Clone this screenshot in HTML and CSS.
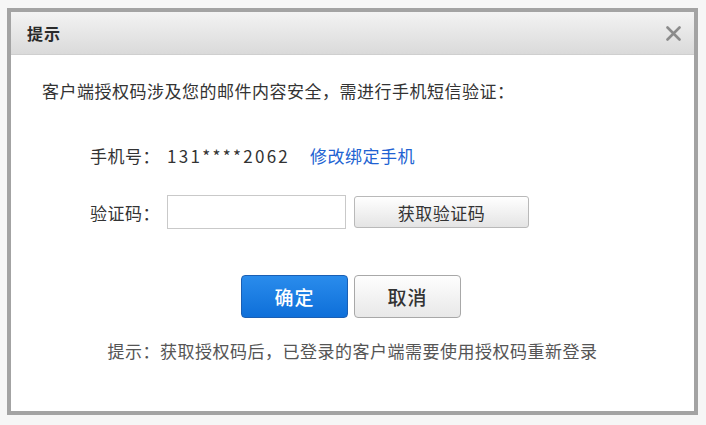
FILE: index.html
```html
<!DOCTYPE html>
<html lang="zh-CN">
<head>
<meta charset="utf-8">
<title>提示</title>
<link rel="stylesheet" href="styles.css">
</head>
<body>
<div class="dialog">
  <div class="dialog-header">
    <span class="dialog-title">提示</span>
    <svg class="close" width="15" height="15" viewBox="0 0 15 15"><path d="M1.5 1.5 L13.5 13.5 M13.5 1.5 L1.5 13.5" stroke="#8b8b8b" stroke-width="2.6" stroke-linecap="round"/></svg>
  </div>
  <div class="dialog-body">
    <p class="intro">客户端授权码涉及您的邮件内容安全，需进行手机短信验证：</p>
    <div class="row phone-row">
      <span class="label">手机号：</span>
      <span class="phone">131****2062</span>
      <a class="link" href="#">修改绑定手机</a>
    </div>
    <div class="row code-row">
      <span class="label">验证码：</span>
      <input class="code-input" type="text">
      <button class="get-code" type="button">获取验证码</button>
    </div>
    <div class="actions">
      <button class="btn btn-primary" type="button">确定</button>
      <button class="btn btn-default" type="button">取消</button>
    </div>
    <p class="hint">提示：获取授权码后，已登录的客户端需要使用授权码重新登录</p>
  </div>
</div>
</body>
</html>
```

FILE: styles.css
```css
* { box-sizing: border-box; }
html, body { margin: 0; padding: 0; }
body {
  background: #f6f6f6;
  font-family: "Noto Sans CJK SC", "Liberation Sans", sans-serif;
  color: #333;
  width: 706px;
  height: 425px;
  overflow: hidden;
}
.dialog {
  margin: 8px 0 0 7px;
  width: 691px;
  height: 407px;
  border: 4px solid #a3a3a3;
  background: #fff;
  display: flex;
  flex-direction: column;
}
.dialog-header {
  height: 43px;
  flex: none;
  display: flex;
  align-items: center;
  justify-content: space-between;
  padding: 0 13px 0 16px;
  background: linear-gradient(#f3f3f3, #dadada);
  border-bottom: 1px solid #cfcfcf;
}
.dialog-title {
  font-size: 16px;
  font-weight: bold;
  color: #2b2b2b;
  letter-spacing: 1px;
}
.close { display: block; }
.dialog-body {
  padding: 24px 0 0 31px;
  font-size: 17px;
  letter-spacing: 0.5px;
}
.intro {
  margin: 0;
  line-height: 24px;
}
.row {
  display: flex;
  align-items: center;
  padding-left: 48px;
}
.phone-row {
  margin-top: 40px;
  height: 24px;
}
.label {
  width: 77px;
  flex: none;
}
.phone {
  letter-spacing: 2.3px;
  margin-right: 20px;
}
.link {
  color: #2162d2;
  text-decoration: none;
}
.code-row {
  margin-top: 28px;
}
.code-input {
  width: 179px;
  height: 34px;
  border: 1px solid #c9c9c9;
  margin: 0;
  padding: 0 6px;
  font: inherit;
}
.get-code {
  margin-left: 8px;
  width: 175px;
  height: 32px;
  border: 1px solid #b9b9b9;
  border-radius: 3px;
  background: linear-gradient(#ffffff, #e4e4e4);
  font: inherit;
  letter-spacing: 0.5px;
  color: #333;
  padding: 0;
}
.actions {
  display: flex;
  justify-content: center;
  gap: 6px;
  margin: 46px 0 0 -34px;
}
.btn {
  width: 107px;
  height: 43px;
  border-radius: 4px;
  font-family: inherit;
  font-size: 19px;
  font-weight: 500;
  letter-spacing: 1px;
  padding: 0;
}
.btn-primary {
  background: linear-gradient(#2a8cec, #0e6fd9);
  border: 1px solid #1a5fb4;
  color: #fff;
}
.btn-default {
  background: linear-gradient(#fefefe, #e8e8e8);
  border: 1px solid #a8a8a8;
  color: #333;
}
.hint {
  margin: 21px 0 0 -31px;
  text-align: center;
  line-height: 24px;
  color: #555;
}
```
